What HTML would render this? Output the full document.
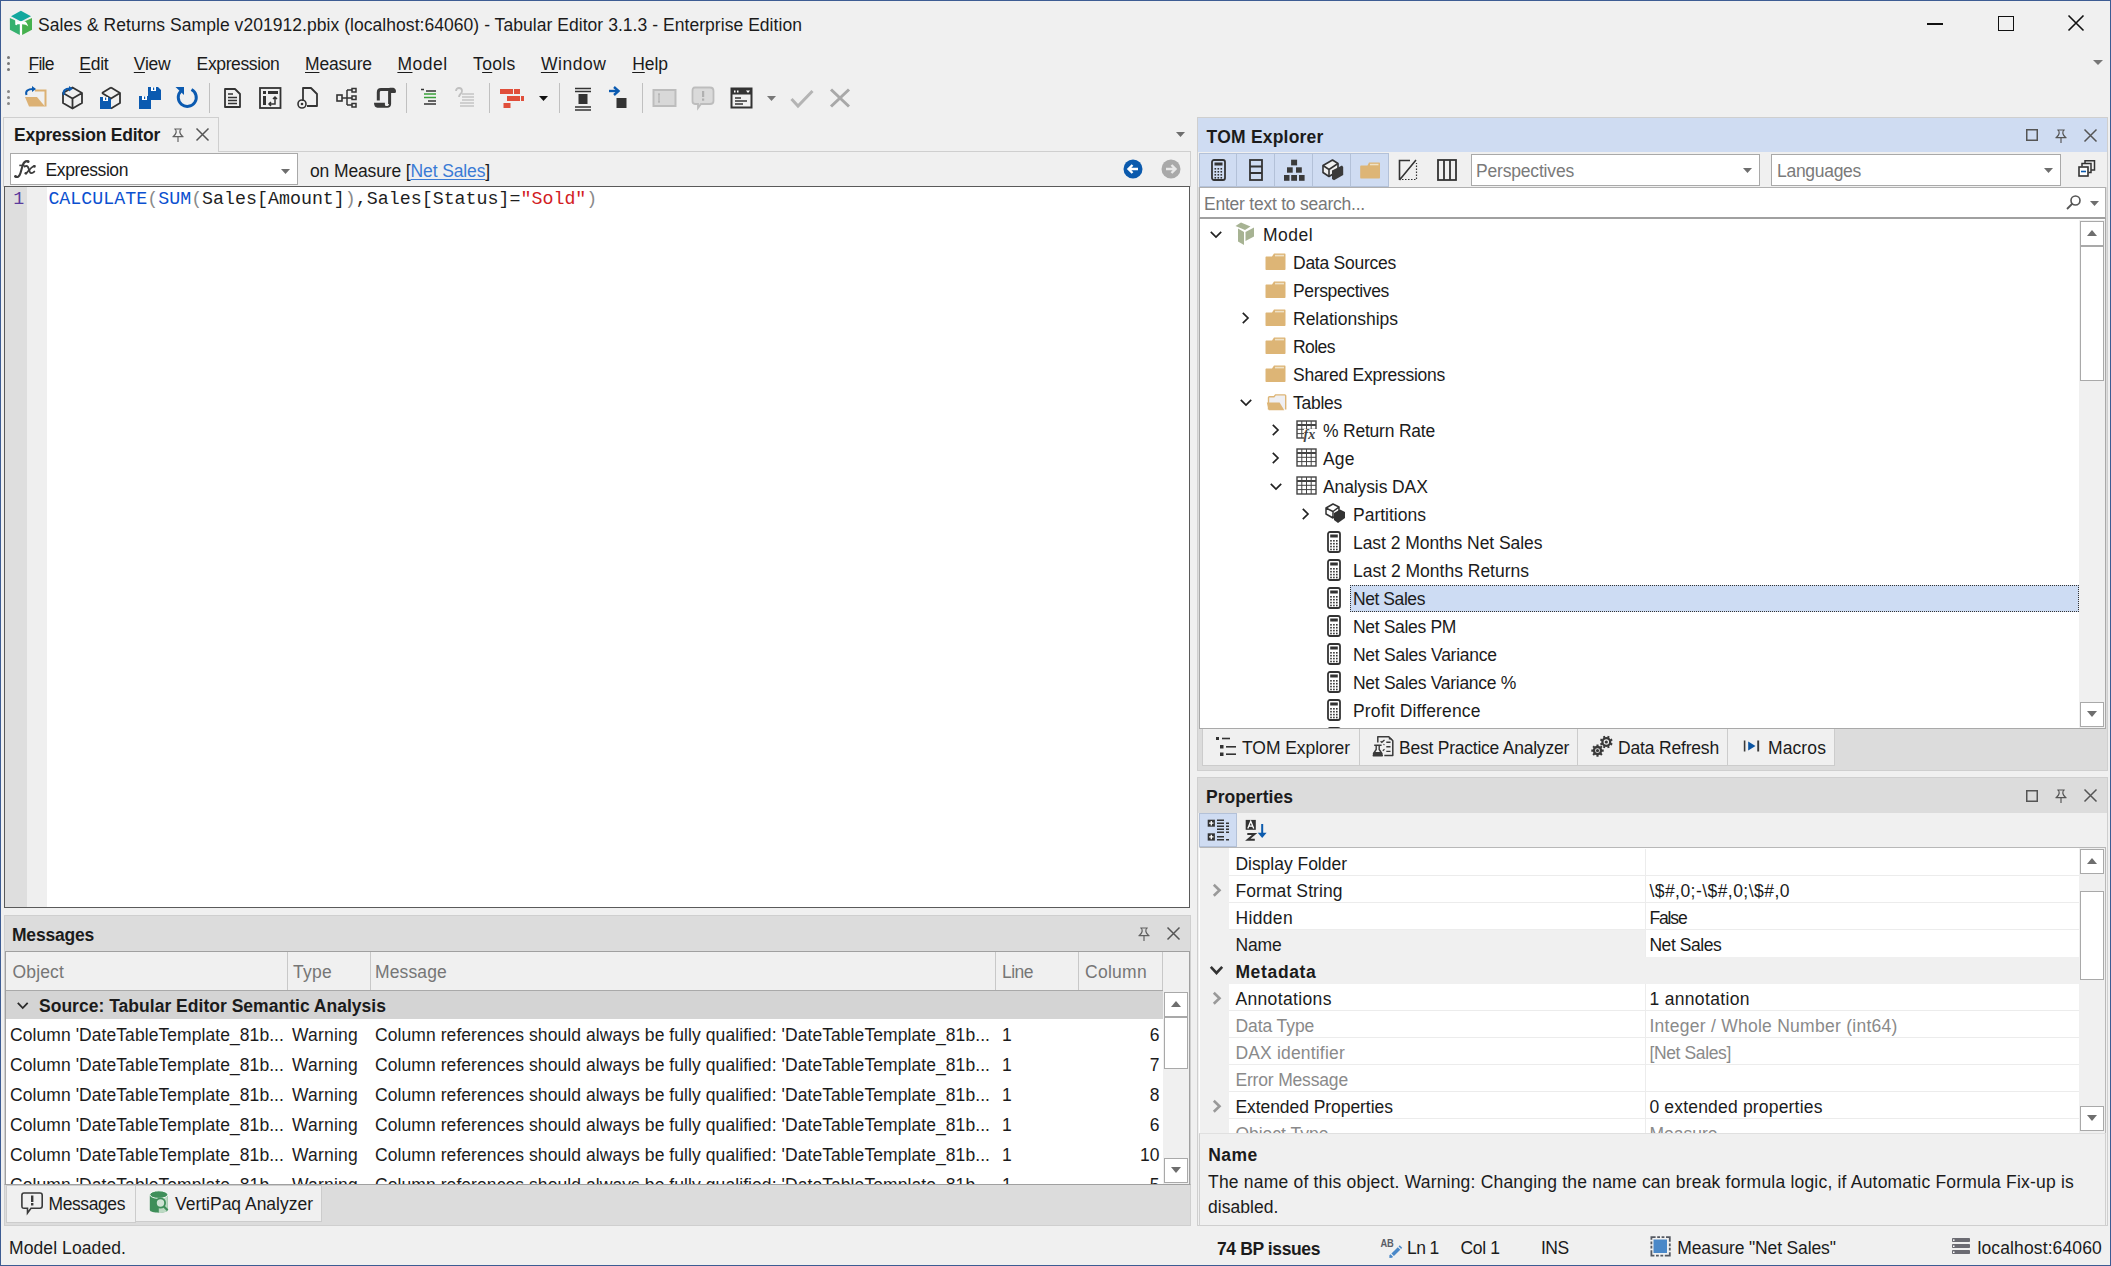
<!DOCTYPE html>
<html><head><meta charset="utf-8">
<style>
*{box-sizing:border-box}
html,body{margin:0;padding:0}
body{width:2111px;height:1266px;overflow:hidden;background:#f0f0f0;position:relative;font-family:"Liberation Sans",sans-serif;font-size:17.5px;color:#1b1b1b}
.a{position:absolute}
.t{position:absolute;white-space:nowrap}
svg{position:absolute;overflow:visible}
</style></head><body>
<div class="a" style="left:0;top:0;width:2111px;height:1266px;border:1px solid #3d5c93;z-index:50"></div>
<div id="titlebar">
<svg style="left:6px;top:8px" width="30" height="30" viewBox="0 0 30 30">
  <polygon points="14.9,2.8 25,8.3 14.9,13.6 5,8.3" fill="#13a89e"/>
  <polygon points="3.9,9.9 13.8,14.6 13.8,27 3.9,21.8" fill="#35b16f"/>
  <polygon points="16.1,14.6 26,9.9 26,21.8 16.1,27" fill="#46b14e"/>
  <path d="M9.2,12 L11,12.3 L11.6,13.3 L18.5,13.2 C20,13.5 21.2,15 22.2,18.5 C20.5,17 19,16.3 16,16.2 V27 H14 V16.2 L11.5,16.3 L10.5,17.2 L9.3,16.8 Z" fill="#fff"/>
</svg>
<div class="a" style="left:1927px;top:23px;width:16px;height:2px;background:#111"></div>
<div class="a" style="left:1998px;top:16px;width:16px;height:15px;border:1.5px solid #111"></div>
<svg style="left:2068px;top:15px" width="16" height="16"><path d="M0.5,0.5 L15.5,15.5 M15.5,0.5 L0.5,15.5" stroke="#111" stroke-width="1.6"/></svg>
</div>

<!-- ===== MENU BAR ===== -->
<div id="menubar">
<div class="a" style="left:7px;top:56px;width:3px;height:3px;border-radius:2px;background:#777"></div>
<div class="a" style="left:7px;top:62px;width:3px;height:3px;border-radius:2px;background:#777"></div>
<div class="a" style="left:7px;top:68px;width:3px;height:3px;border-radius:2px;background:#777"></div>
<svg style="left:2093px;top:60px" width="10" height="6"><polygon points="0,0 10,0 5,5" fill="#777"/></svg>
</div>


<div id="toolbar">
<div class="a" style="left:7px;top:90px;width:3px;height:3px;border-radius:2px;background:#888"></div>
<div class="a" style="left:7px;top:96px;width:3px;height:3px;border-radius:2px;background:#888"></div>
<div class="a" style="left:7px;top:102px;width:3px;height:3px;border-radius:2px;background:#888"></div>
<!-- open folder -->
<svg style="left:24px;top:86px" width="24" height="22" viewBox="0 0 24 22">
 <path d="M11,4.5 H21.5 V20.5" fill="none" stroke="#dcb174" stroke-width="2"/>
 <polygon points="1,11 13,11 21,20.5 5,20.5" fill="#dcb174"/>
 <path d="M2.5,9 C1,5 4,3 9,3" fill="none" stroke="#0b5ab0" stroke-width="2"/>
 <polygon points="8,0 12,3 8,6" fill="#0b5ab0"/>
</svg>
<!-- cube w arrow -->
<svg style="left:62px;top:86px" width="22" height="24" viewBox="0 0 22 24">
 <path d="M10.5,1.5 L20,7 L20,17 L10.5,22.5 L1,17 L1,7 Z M1,7 L10.5,12.5 L20,7 M10.5,12.5 V22.5" fill="none" stroke="#333" stroke-width="1.8" stroke-linejoin="round"/>
 <path d="M2,9 C0.5,5 3,2.5 8,2.5" fill="none" stroke="#0b5ab0" stroke-width="2"/>
 <polygon points="7,0 11,2.7 7,5.5" fill="#0b5ab0"/>
</svg>
<!-- cube w disk -->
<svg style="left:100px;top:86px" width="22" height="24" viewBox="0 0 22 24">
 <path d="M11,1.5 L20,7 L20,17 L11,22.5 M2,7 L11,12.5 L20,7 M2,7 L11,1.5" fill="none" stroke="#333" stroke-width="1.8" stroke-linejoin="round"/>
 <path d="M0,11 H8 L11,13 V23 H0 Z" fill="#0b5ab0"/>
 <rect x="3" y="11" width="5" height="4" fill="#fff"/><rect x="5" y="11.5" width="1.2" height="2.5" fill="#0b5ab0"/>
</svg>
<!-- two disks -->
<svg style="left:138px;top:86px" width="24" height="24" viewBox="0 0 24 24">
 <path d="M10,1 H20 L23,4 V14 H10 Z" fill="#0b5ab0"/>
 <rect x="13" y="1" width="5" height="4" fill="#fff"/><rect x="15" y="1.5" width="1.2" height="2.5" fill="#0b5ab0"/>
 <path d="M1,10 H10 L13,13 V23 H1 Z" fill="#0b5ab0"/>
 <rect x="4" y="10" width="5" height="4" fill="#fff"/><rect x="6" y="10.5" width="1.2" height="2.5" fill="#0b5ab0"/>
</svg>
<!-- refresh -->
<svg style="left:175px;top:86px" width="24" height="24" viewBox="0 0 24 24">
 <path d="M6,5 A9,9 0 1 0 16.5,3.5" fill="none" stroke="#0b5ab0" stroke-width="3"/>
 <polygon points="0.5,1 9,1 9,9" fill="#0b5ab0"/>
</svg>
<div class="a" style="left:209px;top:83px;width:1px;height:30px;background:#c0c0c0"></div>
<!-- doc -->
<svg style="left:224px;top:88px" width="18" height="20" viewBox="0 0 18 20">
 <path d="M1,1 H11 L16,6 V19 H1 Z" fill="none" stroke="#333" stroke-width="1.8" stroke-linejoin="round"/>
 <path d="M4,6 H9 M4,9.5 H13 M4,12.5 H13 M4,15.5 H13" stroke="#333" stroke-width="1.4"/>
</svg>
<!-- box arrows -->
<svg style="left:259px;top:87px" width="24" height="22" viewBox="0 0 24 22">
 <rect x="1" y="1" width="20.5" height="20" fill="none" stroke="#333" stroke-width="1.8"/>
 <rect x="4" y="4" width="3" height="3" fill="#333"/><rect x="9" y="4" width="10" height="3" fill="#333"/>
 <rect x="4" y="9" width="3" height="9" fill="#333"/>
 <path d="M10,17 H16 V11 M14,12 L16,10 L18,12 M12,15 L10,17 L12,19" fill="none" stroke="#333" stroke-width="1.5"/>
</svg>
<!-- doc circle -->
<svg style="left:297px;top:87px" width="24" height="22" viewBox="0 0 24 22">
 <path d="M6,14 V1 H14 L20,7 V19 H10" fill="none" stroke="#333" stroke-width="1.8" stroke-linejoin="round"/>
 <circle cx="5" cy="17" r="4" fill="none" stroke="#333" stroke-width="1.6"/><circle cx="5" cy="17" r="1.3" fill="#333"/>
</svg>
<!-- hierarchy -->
<svg style="left:336px;top:87px" width="22" height="22" viewBox="0 0 22 22">
 <rect x="1" y="8" width="5" height="6" fill="none" stroke="#333" stroke-width="1.6"/>
 <rect x="16" y="1.5" width="4" height="3.5" fill="none" stroke="#333" stroke-width="1.5"/>
 <rect x="16" y="9" width="4" height="3.5" fill="none" stroke="#333" stroke-width="1.5"/>
 <rect x="16" y="16.5" width="4" height="3.5" fill="none" stroke="#333" stroke-width="1.5"/>
 <path d="M6,11 H11 M11,3 V18 M11,3 H16 M11,11 H16 M11,18 H16" fill="none" stroke="#333" stroke-width="1.5"/>
</svg>
<!-- scroll -->
<svg style="left:368px;top:84px" width="32" height="28" viewBox="0 0 32 28">
 <rect x="11.5" y="6.5" width="9.3" height="13" fill="#eeeef0"/>
 <path d="M10.3,16.6 V8.2 C10.3,6.2 11.3,5.4 13,5.4 H24.8 C25.9,5.4 26.5,6.2 26.5,7.6 H21.6 V20" fill="none" stroke="#3a3a3a" stroke-width="3" stroke-linejoin="round"/>
 <path d="M26.6,5.3 V7.8 H21.6 V3.8 H24.6 C25.8,3.8 26.6,4.4 26.6,5.3 Z" fill="#3a3a3a"/>
 <path d="M6,18.8 H16.9 V20.6 C16.9,21.6 17.6,22.1 18.8,22.1 C20.2,22.1 21,21.3 21,20 H23.1 C23.1,22.3 21.6,23.7 19.4,23.7 H9.5 C7.3,23.7 6,22 6,18.8 Z" fill="#3a3a3a"/>
</svg>
<div class="a" style="left:406px;top:83px;width:1px;height:30px;background:#c0c0c0"></div>
<!-- indent green -->
<svg style="left:420px;top:88px" width="20" height="18" viewBox="0 0 20 18">
 <path d="M1,1.5 H4 M6,3 H16 M4,16 H16 M8,13 H16" stroke="#333" stroke-width="1.3"/>
 <path d="M4,6 H16 M4,9.5 H16" stroke="#3aa03a" stroke-width="1.5"/>
</svg>
<!-- disabled icon -->
<svg style="left:454px;top:86px" width="22" height="22" viewBox="0 0 22 22">
 <path d="M2,5 C2,1 8,1 8,5 C8,8 5,8 5,11" fill="none" stroke="#c0c0c0" stroke-width="1.8"/>
 <path d="M8,8 H20 M8,11 H20 M8,14 H20 M6,17 H20 M6,20 H20" stroke="#c4c4c4" stroke-width="1.6"/>
</svg>
<div class="a" style="left:489px;top:83px;width:1px;height:30px;background:#c0c0c0"></div>
<!-- red bars -->
<svg style="left:499px;top:88px" width="26" height="22" viewBox="0 0 26 22">
 <rect x="1" y="1" width="13" height="5" fill="#e04e3a"/><rect x="15" y="1" width="6" height="5" fill="#e04e3a"/>
 <rect x="8" y="8" width="13" height="5" fill="#e04e3a"/><rect x="22" y="8" width="3" height="5" fill="#e04e3a"/>
 <rect x="4.5" y="15" width="7" height="5" fill="#e04e3a"/>
</svg>
<svg style="left:539px;top:96px" width="9" height="6"><polygon points="0,0 9,0 4.5,5" fill="#111"/></svg>
<div class="a" style="left:559px;top:83px;width:1px;height:30px;background:#c0c0c0"></div>
<!-- square with lines -->
<svg style="left:574px;top:87px" width="18" height="24" viewBox="0 0 18 24">
 <path d="M1,1.5 H17 M1,4.5 H17 M1,20 H17 M1,23 H17" stroke="#333" stroke-width="1.4"/>
 <rect x="4.5" y="7" width="9" height="10" fill="#333"/>
</svg>
<!-- arrow square -->
<svg style="left:608px;top:86px" width="20" height="23" viewBox="0 0 20 23">
 <path d="M1,5 H9" stroke="#0b5ab0" stroke-width="2.4"/><path d="M6,1 L10.5,5 L6,9" fill="none" stroke="#0b5ab0" stroke-width="2.4"/>
 <rect x="8.5" y="12" width="10" height="10" fill="#333"/>
</svg>
<div class="a" style="left:642px;top:83px;width:1px;height:30px;background:#c0c0c0"></div>
<!-- gray box -->
<svg style="left:652px;top:88px" width="25" height="20" viewBox="0 0 25 20">
 <rect x="1.5" y="2" width="22" height="16" fill="#d8d8d8" stroke="#bdbdbd" stroke-width="2"/>
 <path d="M6,6 H8 M7,6 V14 M6,14 H8" stroke="#aaa" stroke-width="1"/>
</svg>
<!-- gray bubble -->
<svg style="left:691px;top:86px" width="24" height="24" viewBox="0 0 24 24">
 <path d="M4,1.5 H19 C21,1.5 22.5,3 22.5,5 V15 C22.5,17 21,18 19,18 H10 L7,22 V18 H4 C2,18 1.5,17 1.5,15 V5 C1.5,3 2,1.5 4,1.5 Z" fill="#dadada" stroke="#bdbdbd" stroke-width="1.8"/>
 <rect x="11" y="5" width="2.2" height="6" fill="#b0b0b0"/><rect x="11" y="12.5" width="2.2" height="2.2" fill="#b0b0b0"/>
</svg>
<!-- form -->
<svg style="left:730px;top:87px" width="23" height="22" viewBox="0 0 23 22">
 <rect x="1.5" y="1.5" width="20" height="19" fill="none" stroke="#333" stroke-width="2"/>
 <rect x="1.5" y="1.5" width="20" height="6" fill="#333"/>
 <rect x="4" y="3.5" width="1.5" height="2" fill="#fff"/><rect x="7" y="3.5" width="1.5" height="2" fill="#fff"/>
 <polygon points="16,3.5 20,3.5 18,6" fill="#fff"/>
 <path d="M5,11 H11 M5,14 H17 M5,17 H13" stroke="#333" stroke-width="1.5"/>
</svg>
<svg style="left:767px;top:96px" width="9" height="6"><polygon points="0,0 9,0 4.5,5" fill="#777"/></svg>
<!-- check gray -->
<svg style="left:790px;top:89px" width="24" height="20" viewBox="0 0 24 20">
 <path d="M1.5,10 L8,17 L22.5,2" fill="none" stroke="#b4b4b4" stroke-width="3"/>
</svg>
<!-- x gray -->
<svg style="left:829px;top:88px" width="22" height="20" viewBox="0 0 22 20">
 <path d="M2,1.5 L20,18.5 M20,1.5 L2,18.5" stroke="#a8a8a8" stroke-width="3"/>
</svg>
</div>


<div class="t" style="letter-spacing:0.047px;left:38px;top:15.22px;font-size:17.5px;line-height:20px;">Sales &amp; Returns Sample v201912.pbix (localhost:64060) - Tabular Editor 3.1.3 - Enterprise Edition</div>
<div class="t" style="letter-spacing:-0.705px;left:28.4px;top:54.22px;font-size:17.5px;line-height:20px;"><u style="text-underline-offset:2px">F</u>ile</div>
<div class="t" style="letter-spacing:-0.243px;left:79.3px;top:54.22px;font-size:17.5px;line-height:20px;"><u style="text-underline-offset:2px">E</u>dit</div>
<div class="t" style="letter-spacing:-0.231px;left:133.8px;top:54.22px;font-size:17.5px;line-height:20px;"><u style="text-underline-offset:2px">V</u>iew</div>
<div class="t" style="letter-spacing:-0.368px;left:196.6px;top:54.22px;font-size:17.5px;line-height:20px;">Expression</div>
<div class="t" style="letter-spacing:-0.171px;left:305px;top:54.22px;font-size:17.5px;line-height:20px;"><u style="text-underline-offset:2px">M</u>easure</div>
<div class="t" style="letter-spacing:0.506px;left:397.4px;top:54.22px;font-size:17.5px;line-height:20px;"><u style="text-underline-offset:2px">M</u>odel</div>
<div class="t" style="letter-spacing:0.368px;left:473px;top:54.22px;font-size:17.5px;line-height:20px;">T<u style="text-underline-offset:2px">o</u>ols</div>
<div class="t" style="letter-spacing:0.572px;left:540.9px;top:54.22px;font-size:17.5px;line-height:20px;"><u style="text-underline-offset:2px">W</u>indow</div>
<div class="t" style="letter-spacing:-0.050px;left:632.2px;top:54.22px;font-size:17.5px;line-height:20px;"><u style="text-underline-offset:2px">H</u>elp</div>
<div class="a" style="left:3px;top:117px;width:216px;height:35px;border:1px solid #cfcfcf;border-bottom:none;"></div>
<div class="t" style="letter-spacing:-0.222px;left:14px;top:125.22px;font-size:17.5px;line-height:20px;font-weight:bold;">Expression Editor</div>
<svg style="left:172px;top:128px" width="12" height="14" viewBox="0 0 12 14"><path d="M2.2,1 H9.8 M3.2,1 C4.8,3 4.6,5.5 1.5,8.3 M8.8,1 C7.2,3 7.4,5.5 10.5,8.3 M0.5,8.6 H11.5 M6,8.6 V14" fill="none" stroke="#606060" stroke-width="1.15"/></svg>
<svg style="left:196px;top:128px" width="13" height="13" viewBox="0 0 13 13"><path d="M0.5,0.5 L12.5,12.5 M12.5,0.5 L0.5,12.5" stroke="#555" stroke-width="1.5"/></svg>
<svg style="left:1176px;top:132px" width="9" height="5" viewBox="0 0 9 5"><polygon points="0,0 9,0 4.5,5" fill="#6e6e6e"/></svg>
<div class="a" style="left:218px;top:151px;width:973px;height:1px;background:#cfcfcf;"></div>
<div class="a" style="left:3px;top:151px;width:1px;height:36px;background:#cfcfcf;"></div>
<div class="a" style="left:1190px;top:151px;width:1px;height:36px;background:#cfcfcf;"></div>
<div class="a" style="left:10px;top:153px;width:288px;height:32px;background:#fff;border:1px solid #a9a9a9;"></div>
<svg style="left:10px;top:154px" width="30" height="28" viewBox="0 0 30 28"><path d="M5.2,22.6 C7.5,23.8 9.5,22.5 10.5,19 L12.6,11.5 C13.8,8 15.5,6.6 18.3,7.3" fill="none" stroke="#3c3c3c" stroke-width="2.1" stroke-linecap="round"/><circle cx="18.2" cy="7.8" r="1.3" fill="#3c3c3c"/><circle cx="5.6" cy="22.3" r="1.3" fill="#3c3c3c"/><path d="M9.3,11.4 H14.6" stroke="#3c3c3c" stroke-width="1.6"/><path d="M14.6,12.5 C16.6,11.3 17.8,12 18.6,14.5 L19.8,17.8 C20.6,19.6 22.2,19.6 24.3,17.6" fill="none" stroke="#3c3c3c" stroke-width="1.9" stroke-linecap="round"/><path d="M24.6,11.8 C23,11.7 21.5,13 16,19.6" fill="none" stroke="#3c3c3c" stroke-width="1.7" stroke-linecap="round"/><circle cx="24.4" cy="12.4" r="1.3" fill="#3c3c3c"/><circle cx="15.8" cy="19.3" r="1.3" fill="#3c3c3c"/></svg>
<div class="t" style="letter-spacing:-0.418px;left:45.6px;top:159.82px;font-size:17.5px;line-height:20px;">Expression</div>
<svg style="left:281px;top:169px" width="9" height="5" viewBox="0 0 9 5"><polygon points="0,0 9,0 4.5,5" fill="#6e6e6e"/></svg>
<div class="t" style="letter-spacing:-0.131px;left:310px;top:160.62px;font-size:17.5px;line-height:20px;">on Measure [<span style="color:#3a7bd5;text-decoration:underline;text-underline-offset:2px">Net Sales</span>]</div>
<svg style="left:1123px;top:159px" width="20" height="20" viewBox="0 0 20 20"><circle cx="10" cy="10" r="9.5" fill="#0b5aad"/><path d="M15,10 H6 M9.5,6 L5.5,10 L9.5,14" fill="none" stroke="#fff" stroke-width="2.4"/></svg>
<svg style="left:1161px;top:159px" width="20" height="20" viewBox="0 0 20 20"><circle cx="10" cy="10" r="9.5" fill="#a9a9a9"/><path d="M5,10 H14 M10.5,6 L14.5,10 L10.5,14" fill="none" stroke="#e8e8e8" stroke-width="2.4"/></svg>
<div class="a" style="left:4px;top:186px;width:1186px;height:722px;background:#fff;border:1px solid #5a5a5a;"></div>
<div class="a" style="left:5px;top:187px;width:22px;height:720px;background:#dedede;"></div>
<div class="a" style="left:27px;top:187px;width:20px;height:720px;background:#efefef;"></div>
<div class="t" style="left:13.3px;top:188.32px;font-size:18.3px;line-height:22px;color:#5b3a9c;font-family:'Liberation Mono',monospace;">1</div>
<div class="t" style="letter-spacing:0.007px;left:48.4px;top:188.22px;font-size:18.3px;line-height:22px;color:#1e1e1e;font-family:'Liberation Mono',monospace;"><span style="color:#0b50d0">CALCULATE</span><span style="color:#8a8a8a">(</span><span style="color:#0b50d0">SUM</span><span style="color:#8a8a8a">(</span>Sales[Amount]<span style="color:#8a8a8a">)</span>,Sales[Status]=<span style="color:#d2201f">"Sold"</span><span style="color:#8a8a8a">)</span></div>
<div class="a" style="left:4px;top:915px;width:1187px;height:311px;background:#dcdcdc;border:1px solid #cfcfcf;"></div>
<div class="t" style="letter-spacing:-0.209px;left:12px;top:925.22px;font-size:17.5px;line-height:20px;font-weight:bold;">Messages</div>
<svg style="left:1138px;top:927px" width="12" height="14" viewBox="0 0 12 14"><path d="M2.2,1 H9.8 M3.2,1 C4.8,3 4.6,5.5 1.5,8.3 M8.8,1 C7.2,3 7.4,5.5 10.5,8.3 M0.5,8.6 H11.5 M6,8.6 V14" fill="none" stroke="#606060" stroke-width="1.15"/></svg>
<svg style="left:1167px;top:927px" width="13" height="13" viewBox="0 0 13 13"><path d="M0.5,0.5 L12.5,12.5 M12.5,0.5 L0.5,12.5" stroke="#555" stroke-width="1.5"/></svg>
<div class="a" style="left:5px;top:951px;width:1185px;height:234px;background:#fff;border:1px solid #a0a0a0;"></div>
<div class="a" style="left:6px;top:952px;width:1183px;height:38px;background:#f0f0f0;"></div>
<div class="a" style="left:6px;top:990px;width:1183px;height:1px;background:#a9a9a9;"></div>
<div class="a" style="left:287px;top:952px;width:1px;height:38px;background:#c8c8c8;"></div>
<div class="a" style="left:370px;top:952px;width:1px;height:38px;background:#c8c8c8;"></div>
<div class="a" style="left:995px;top:952px;width:1px;height:38px;background:#c8c8c8;"></div>
<div class="a" style="left:1078px;top:952px;width:1px;height:38px;background:#c8c8c8;"></div>
<div class="a" style="left:1162px;top:952px;width:1px;height:38px;background:#c8c8c8;"></div>
<div class="t" style="letter-spacing:0.154px;left:12.5px;top:962.42px;font-size:17.5px;line-height:20px;color:#767676;">Object</div>
<div class="t" style="letter-spacing:0.262px;left:293px;top:962.42px;font-size:17.5px;line-height:20px;color:#767676;">Type</div>
<div class="t" style="letter-spacing:0.141px;left:375px;top:962.42px;font-size:17.5px;line-height:20px;color:#767676;">Message</div>
<div class="t" style="letter-spacing:-0.523px;left:1002px;top:962.42px;font-size:17.5px;line-height:20px;color:#767676;">Line</div>
<div class="t" style="letter-spacing:0.281px;left:1085px;top:962.42px;font-size:17.5px;line-height:20px;color:#767676;">Column</div>
<div class="a" style="left:6px;top:991px;width:1157px;height:28px;background:#d4d4d4;"></div>
<svg style="left:17px;top:1002px" width="11.5" height="7" viewBox="0 0 11.5 7"><path d="M0.8,0.8 L5.75,6 L10.7,0.8" fill="none" stroke="#2a2a2a" stroke-width="1.8"/></svg>
<div class="t" style="letter-spacing:0.020px;left:39px;top:996.22px;font-size:17.5px;line-height:20px;font-weight:bold;">Source: Tabular Editor Semantic Analysis</div>
<div class="t" style="letter-spacing:0.067px;left:10px;top:1024.92px;font-size:17.5px;line-height:20px;">Column &#x27;DateTableTemplate_81b...</div>
<div class="t" style="letter-spacing:0.212px;left:292px;top:1024.92px;font-size:17.5px;line-height:20px;">Warning</div>
<div class="t" style="letter-spacing:0.073px;left:375px;top:1024.92px;font-size:17.5px;line-height:20px;">Column references should always be fully qualified: &#x27;DateTableTemplate_81b...</div>
<div class="t" style="left:1002px;top:1024.92px;font-size:17.5px;line-height:20px;">1</div>
<div class="t" style="right:951.5px;top:1024.92px;font-size:17.5px;line-height:20px;">6</div>
<div class="t" style="letter-spacing:0.067px;left:10px;top:1054.92px;font-size:17.5px;line-height:20px;">Column &#x27;DateTableTemplate_81b...</div>
<div class="t" style="letter-spacing:0.212px;left:292px;top:1054.92px;font-size:17.5px;line-height:20px;">Warning</div>
<div class="t" style="letter-spacing:0.073px;left:375px;top:1054.92px;font-size:17.5px;line-height:20px;">Column references should always be fully qualified: &#x27;DateTableTemplate_81b...</div>
<div class="t" style="left:1002px;top:1054.92px;font-size:17.5px;line-height:20px;">1</div>
<div class="t" style="right:951.5px;top:1054.92px;font-size:17.5px;line-height:20px;">7</div>
<div class="t" style="letter-spacing:0.067px;left:10px;top:1084.92px;font-size:17.5px;line-height:20px;">Column &#x27;DateTableTemplate_81b...</div>
<div class="t" style="letter-spacing:0.212px;left:292px;top:1084.92px;font-size:17.5px;line-height:20px;">Warning</div>
<div class="t" style="letter-spacing:0.073px;left:375px;top:1084.92px;font-size:17.5px;line-height:20px;">Column references should always be fully qualified: &#x27;DateTableTemplate_81b...</div>
<div class="t" style="left:1002px;top:1084.92px;font-size:17.5px;line-height:20px;">1</div>
<div class="t" style="right:951.5px;top:1084.92px;font-size:17.5px;line-height:20px;">8</div>
<div class="t" style="letter-spacing:0.067px;left:10px;top:1114.92px;font-size:17.5px;line-height:20px;">Column &#x27;DateTableTemplate_81b...</div>
<div class="t" style="letter-spacing:0.212px;left:292px;top:1114.92px;font-size:17.5px;line-height:20px;">Warning</div>
<div class="t" style="letter-spacing:0.073px;left:375px;top:1114.92px;font-size:17.5px;line-height:20px;">Column references should always be fully qualified: &#x27;DateTableTemplate_81b...</div>
<div class="t" style="left:1002px;top:1114.92px;font-size:17.5px;line-height:20px;">1</div>
<div class="t" style="right:951.5px;top:1114.92px;font-size:17.5px;line-height:20px;">6</div>
<div class="t" style="letter-spacing:0.067px;left:10px;top:1144.92px;font-size:17.5px;line-height:20px;">Column &#x27;DateTableTemplate_81b...</div>
<div class="t" style="letter-spacing:0.212px;left:292px;top:1144.92px;font-size:17.5px;line-height:20px;">Warning</div>
<div class="t" style="letter-spacing:0.073px;left:375px;top:1144.92px;font-size:17.5px;line-height:20px;">Column references should always be fully qualified: &#x27;DateTableTemplate_81b...</div>
<div class="t" style="left:1002px;top:1144.92px;font-size:17.5px;line-height:20px;">1</div>
<div class="t" style="right:951.5px;top:1144.92px;font-size:17.5px;line-height:20px;">10</div>
<div class="t" style="letter-spacing:0.067px;left:10px;top:1174.92px;font-size:17.5px;line-height:20px;">Column &#x27;DateTableTemplate_81b...</div>
<div class="t" style="letter-spacing:0.212px;left:292px;top:1174.92px;font-size:17.5px;line-height:20px;">Warning</div>
<div class="t" style="letter-spacing:0.073px;left:375px;top:1174.92px;font-size:17.5px;line-height:20px;">Column references should always be fully qualified: &#x27;DateTableTemplate_81b...</div>
<div class="t" style="left:1002px;top:1174.92px;font-size:17.5px;line-height:20px;">1</div>
<div class="t" style="right:951.5px;top:1174.92px;font-size:17.5px;line-height:20px;">5</div>
<div class="a" style="left:1163px;top:990px;width:26px;height:194px;background:#f0f0f0;"></div>
<div class="a" style="left:1164px;top:992px;width:24px;height:25px;background:#fff;border:1px solid #a9a9a9;"></div>
<svg style="left:1171px;top:1001px" width="10" height="6" viewBox="0 0 10 6"><polygon points="0,6 10,6 5.0,0" fill="#6e6e6e"/></svg>
<div class="a" style="left:1164px;top:1017px;width:24px;height:52px;background:#fff;border:1px solid #a9a9a9;"></div>
<div class="a" style="left:1164px;top:1158px;width:24px;height:25px;background:#fff;border:1px solid #a9a9a9;"></div>
<svg style="left:1171px;top:1167px" width="10" height="6" viewBox="0 0 10 6"><polygon points="0,0 10,0 5.0,6" fill="#6e6e6e"/></svg>
<div class="a" style="left:4px;top:1184px;width:1187px;height:42px;background:#dcdcdc;border:1px solid #cfcfcf;border-top:1px solid #a0a0a0;"></div>
<div class="a" style="left:6px;top:1185px;width:130px;height:38px;background:#f0f0f0;border:1px solid #cccccc;"></div>
<div class="a" style="left:136px;top:1185px;width:186px;height:37px;background:#f0f0f0;border:1px solid #cccccc;border-left:none;"></div>
<svg style="left:21px;top:1192px" width="23" height="23" viewBox="0 0 23 23"><path d="M3,1 H19 C20.6,1 21.2,1.8 21.2,3.2 V14 C21.2,15.5 20.6,16.2 19,16.2 H10 L6.5,21 V16.2 H3 C1.4,16.2 0.9,15.5 0.9,14 V3.2 C0.9,1.8 1.4,1 3,1 Z" fill="none" stroke="#3a3a3a" stroke-width="1.6"/><rect x="10" y="3.5" width="2.4" height="6.5" fill="#3a3a3a"/><rect x="10" y="11" width="2.4" height="2.5" fill="#3a3a3a"/></svg>
<div class="t" style="letter-spacing:-0.408px;left:48.5px;top:1193.62px;font-size:17.5px;line-height:20px;">Messages</div>
<svg style="left:149px;top:1190px" width="20" height="25" viewBox="0 0 20 25"><path d="M0.8,5 V20 C0.8,23.5 18.8,23.5 18.8,20 V5 Z" fill="#3f8f5a"/><path d="M9.8,7.5 C14,7.5 18.8,6.5 18.8,5 V20 C18.8,22 14,23 9.8,23 Z" fill="#bcd9c3"/><ellipse cx="9.8" cy="4.6" rx="9" ry="3.8" fill="#3f8f5a" stroke="#fff" stroke-width="0.9"/><circle cx="11.5" cy="13" r="4.6" fill="#cfe3d4" stroke="#3f8f5a" stroke-width="1.8"/><path d="M14.6,16.2 L18.6,20.2" stroke="#3f8f5a" stroke-width="2.2"/></svg>
<div class="t" style="letter-spacing:-0.008px;left:175px;top:1193.62px;font-size:17.5px;line-height:20px;">VertiPaq Analyzer</div>
<div class="t" style="letter-spacing:0.093px;left:9px;top:1237.82px;font-size:17.5px;line-height:20px;">Model Loaded.</div>
<div class="a" style="left:1197px;top:117px;width:911px;height:654px;background:#dcdcdc;border:1px solid #cfcfcf;"></div>
<div class="a" style="left:1198px;top:118px;width:909px;height:34px;background:#cfdcf2;"></div>
<div class="t" style="letter-spacing:0.214px;left:1206.6px;top:126.72px;font-size:17.5px;line-height:20px;font-weight:bold;">TOM Explorer</div>
<svg style="left:2026px;top:129px" width="12" height="12" viewBox="0 0 12 12"><rect x="0.75" y="0.75" width="10.5" height="10.5" fill="none" stroke="#555" stroke-width="1.5"/></svg>
<svg style="left:2055px;top:129px" width="12" height="14" viewBox="0 0 12 14"><path d="M2.2,1 H9.8 M3.2,1 C4.8,3 4.6,5.5 1.5,8.3 M8.8,1 C7.2,3 7.4,5.5 10.5,8.3 M0.5,8.6 H11.5 M6,8.6 V14" fill="none" stroke="#555" stroke-width="1.15"/></svg>
<svg style="left:2084px;top:129px" width="13" height="13" viewBox="0 0 13 13"><path d="M0.5,0.5 L12.5,12.5 M12.5,0.5 L0.5,12.5" stroke="#555" stroke-width="1.5"/></svg>
<div class="a" style="left:1198px;top:152px;width:909px;height:35px;background:#f0f0f0;"></div>
<div class="a" style="left:1199px;top:153px;width:190px;height:34px;background:#cfdcf2;border:1px solid #b3c1d8;"></div>
<div class="a" style="left:1236px;top:154px;width:1px;height:32px;background:#b3c1d8;"></div>
<div class="a" style="left:1274px;top:154px;width:1px;height:32px;background:#b3c1d8;"></div>
<div class="a" style="left:1312px;top:154px;width:1px;height:32px;background:#b3c1d8;"></div>
<div class="a" style="left:1350px;top:154px;width:1px;height:32px;background:#b3c1d8;"></div>
<svg style="left:1211px;top:159px" width="15" height="22" viewBox="0 0 15 22"><rect x="1" y="1" width="13" height="20" rx="2" fill="none" stroke="#333" stroke-width="1.8"/><rect x="3.5" y="3.5" width="8" height="3" fill="#333"/><rect x="3.5" y="9" width="1.6" height="1.6" fill="#333"/><rect x="3.5" y="12" width="1.6" height="1.6" fill="#333"/><rect x="3.5" y="15" width="1.6" height="1.6" fill="#333"/><rect x="3.5" y="18" width="1.6" height="1.6" fill="#333"/><rect x="6.5" y="9" width="1.6" height="1.6" fill="#333"/><rect x="6.5" y="12" width="1.6" height="1.6" fill="#333"/><rect x="6.5" y="15" width="1.6" height="1.6" fill="#333"/><rect x="6.5" y="18" width="1.6" height="1.6" fill="#333"/><rect x="9.5" y="9" width="1.6" height="1.6" fill="#333"/><rect x="9.5" y="12" width="1.6" height="1.6" fill="#333"/><rect x="9.5" y="15" width="1.6" height="1.6" fill="#333"/><rect x="9.5" y="18" width="1.6" height="1.6" fill="#333"/></svg>
<svg style="left:1249px;top:159px" width="14" height="22" viewBox="0 0 14 22"><rect x="1" y="1" width="12" height="20" fill="none" stroke="#333" stroke-width="1.8"/><path d="M1,7.5 H13 M1,14 H13" stroke="#333" stroke-width="1.8"/></svg>
<svg style="left:1276px;top:150px" width="40" height="40" viewBox="0 0 40 40"><rect x="15.1" y="9.7" width="6" height="5.7" fill="#3a3a3a"/><rect x="11" y="17.3" width="5.7" height="5.4" fill="#3a3a3a"/><rect x="20" y="17.3" width="5.8" height="5.4" fill="#3a3a3a"/><rect x="8" y="25" width="5.5" height="5.8" fill="#3a3a3a"/><rect x="15.2" y="25" width="5.8" height="5.8" fill="#3a3a3a"/><rect x="23" y="25" width="5.6" height="5.8" fill="#3a3a3a"/></svg>
<svg style="left:1322px;top:159px" width="22" height="22" viewBox="0 0 22 22"><path d="M1,6.5 L10.5,1 L16,4.5 L16,12 L7,17.5 L1,13.5 Z" fill="#f0f0f0" stroke="#333" stroke-width="1.6" stroke-linejoin="round"/><path d="M1,6.5 L7,10.5 L16,4.5 M7,10.5 V17.5" fill="none" stroke="#333" stroke-width="1.6"/><path d="M10,11.5 L20,6.5 L21.2,8 V16 L12,21.3 L10,20 Z" fill="#3a3a3a"/></svg>
<svg style="left:1360px;top:161.5px" width="21" height="17" viewBox="0 0 21 17"><path d="M9,0.5 H19 C19.7,0.5 20,0.8 20,1.5 V15.5 C20,16 19.7,16.5 19,16.5 H1 C0.5,16.5 0.2,16 0.2,15.5 V4.5 C0.2,3.8 0.5,3.5 1,3.5 H7.5 Z" fill="#ddb576"/><rect x="10" y="1.8" width="8.5" height="1.5" fill="#efe2c6"/></svg>
<svg style="left:1398px;top:159px" width="20" height="22" viewBox="0 0 20 22"><path d="M1.5,21 V1.5 H12 M1.5,21 L18,1" fill="none" stroke="#333" stroke-width="1.6"/><path d="M4,20.5 H18.5 V4" fill="none" stroke="#333" stroke-width="1.2" stroke-dasharray="1.5,1.5"/></svg>
<svg style="left:1437px;top:159px" width="20" height="22" viewBox="0 0 20 22"><rect x="1" y="1" width="18" height="20" fill="none" stroke="#333" stroke-width="1.8"/><path d="M7,1 V21 M13,1 V21" stroke="#333" stroke-width="1.8"/></svg>
<div class="a" style="left:1471px;top:154px;width:289px;height:32px;background:#fff;border:1px solid #a9a9a9;"></div>
<div class="t" style="letter-spacing:-0.182px;left:1476px;top:160.62px;font-size:17.5px;line-height:20px;color:#7a7a7a;">Perspectives</div>
<svg style="left:1743px;top:168px" width="9" height="5" viewBox="0 0 9 5"><polygon points="0,0 9,0 4.5,5" fill="#6e6e6e"/></svg>
<div class="a" style="left:1771px;top:154px;width:290px;height:32px;background:#fff;border:1px solid #a9a9a9;"></div>
<div class="t" style="letter-spacing:-0.292px;left:1777px;top:160.62px;font-size:17.5px;line-height:20px;color:#7a7a7a;">Languages</div>
<svg style="left:2044px;top:168px" width="9" height="5" viewBox="0 0 9 5"><polygon points="0,0 9,0 4.5,5" fill="#6e6e6e"/></svg>
<svg style="left:2078px;top:160px" width="18" height="18" viewBox="0 0 18 18"><rect x="1" y="7" width="9" height="9" fill="#fff" stroke="#333" stroke-width="1.6"/><path d="M4,6.5 V3.5 H13 V12.5 H10.5 M7,3 V0.8 H16.5 V10 H13.5" fill="none" stroke="#333" stroke-width="1.5"/><path d="M3,11.5 H8" stroke="#0b5aad" stroke-width="1.6"/></svg>
<div class="a" style="left:1199px;top:187px;width:907px;height:32px;background:#fff;border:1px solid #b0b0b0;border-bottom:2px solid #a0a0a0;"></div>
<div class="t" style="letter-spacing:-0.232px;left:1204px;top:193.82px;font-size:17.5px;line-height:20px;color:#787878;">Enter text to search...</div>
<svg style="left:2066px;top:195px" width="15" height="15" viewBox="0 0 15 15"><circle cx="9.5" cy="5.5" r="4.5" fill="none" stroke="#555" stroke-width="1.6"/><path d="M6.5,8.5 L1,14" stroke="#555" stroke-width="1.8"/></svg>
<svg style="left:2090px;top:201px" width="9" height="5" viewBox="0 0 9 5"><polygon points="0,0 9,0 4.5,5" fill="#6e6e6e"/></svg>
<div class="a" style="left:1199px;top:219px;width:907px;height:510px;background:#fff;border:1px solid #a9a9a9;border-top:none;"></div>
<div class="a" style="left:2079px;top:220px;width:26px;height:508px;background:#f0f0f0;"></div>
<div class="a" style="left:2080px;top:221px;width:24px;height:25px;background:#fff;border:1px solid #a9a9a9;"></div>
<svg style="left:2087px;top:230px" width="10" height="6" viewBox="0 0 10 6"><polygon points="0,6 10,6 5.0,0" fill="#6e6e6e"/></svg>
<div class="a" style="left:2080px;top:246px;width:24px;height:135px;background:#fff;border:1px solid #a9a9a9;"></div>
<div class="a" style="left:2080px;top:702px;width:24px;height:25px;background:#fff;border:1px solid #a9a9a9;"></div>
<svg style="left:2087px;top:711px" width="10" height="6" viewBox="0 0 10 6"><polygon points="0,0 10,0 5.0,6" fill="#6e6e6e"/></svg>
<div class="a" style="left:1350px;top:585px;width:729px;height:27px;background:#cddcf3;border:1px dotted #333;"></div>
<svg style="left:1210px;top:231px" width="12" height="7" viewBox="0 0 12 7"><path d="M0.8,0.8 L6.0,6 L11.2,0.8" fill="none" stroke="#222" stroke-width="1.7"/></svg>
<svg style="left:1235px;top:222px" width="22" height="24" viewBox="0 0 22 24"><path d="M0.5,4 L6,0.5 L15.5,4.5 L10,8 Z" fill="#a7b393"/><path d="M3,6.5 L9,10 V23 L3,19.5 Z" fill="#a7b393"/><path d="M10.5,10 L19,5.5 V14.5 L10.5,19 Z" fill="#a7b393"/></svg>
<div class="t" style="letter-spacing:0.466px;left:1263px;top:224.82px;font-size:17.5px;line-height:20px;">Model</div>
<svg style="left:1264.5px;top:253px" width="21" height="18" viewBox="0 0 21 18"><path d="M9,0.5 H19.5 C20.3,0.5 20.5,1 20.5,1.5 V16 C20.5,16.5 20.3,17 19.5,17 H1.5 C0.7,17 0.5,16.5 0.5,16 V4.5 C0.5,3.8 0.8,3.5 1.5,3.5 H7 Z" fill="#ddb576"/><rect x="10" y="1.8" width="9" height="1.6" fill="#efe2c6"/></svg>
<div class="t" style="letter-spacing:-0.253px;left:1293px;top:252.82px;font-size:17.5px;line-height:20px;">Data Sources</div>
<svg style="left:1264.5px;top:281px" width="21" height="18" viewBox="0 0 21 18"><path d="M9,0.5 H19.5 C20.3,0.5 20.5,1 20.5,1.5 V16 C20.5,16.5 20.3,17 19.5,17 H1.5 C0.7,17 0.5,16.5 0.5,16 V4.5 C0.5,3.8 0.8,3.5 1.5,3.5 H7 Z" fill="#ddb576"/><rect x="10" y="1.8" width="9" height="1.6" fill="#efe2c6"/></svg>
<div class="t" style="letter-spacing:-0.349px;left:1293px;top:280.82px;font-size:17.5px;line-height:20px;">Perspectives</div>
<svg style="left:1242px;top:312px" width="7" height="12" viewBox="0 0 7 12"><path d="M0.8,0.8 L6,6.0 L0.8,11.2" fill="none" stroke="#222" stroke-width="1.7"/></svg>
<svg style="left:1264.5px;top:309px" width="21" height="18" viewBox="0 0 21 18"><path d="M9,0.5 H19.5 C20.3,0.5 20.5,1 20.5,1.5 V16 C20.5,16.5 20.3,17 19.5,17 H1.5 C0.7,17 0.5,16.5 0.5,16 V4.5 C0.5,3.8 0.8,3.5 1.5,3.5 H7 Z" fill="#ddb576"/><rect x="10" y="1.8" width="9" height="1.6" fill="#efe2c6"/></svg>
<div class="t" style="letter-spacing:-0.005px;left:1293px;top:308.82px;font-size:17.5px;line-height:20px;">Relationships</div>
<svg style="left:1264.5px;top:337px" width="21" height="18" viewBox="0 0 21 18"><path d="M9,0.5 H19.5 C20.3,0.5 20.5,1 20.5,1.5 V16 C20.5,16.5 20.3,17 19.5,17 H1.5 C0.7,17 0.5,16.5 0.5,16 V4.5 C0.5,3.8 0.8,3.5 1.5,3.5 H7 Z" fill="#ddb576"/><rect x="10" y="1.8" width="9" height="1.6" fill="#efe2c6"/></svg>
<div class="t" style="letter-spacing:-0.550px;left:1293px;top:336.82px;font-size:17.5px;line-height:20px;">Roles</div>
<svg style="left:1264.5px;top:365px" width="21" height="18" viewBox="0 0 21 18"><path d="M9,0.5 H19.5 C20.3,0.5 20.5,1 20.5,1.5 V16 C20.5,16.5 20.3,17 19.5,17 H1.5 C0.7,17 0.5,16.5 0.5,16 V4.5 C0.5,3.8 0.8,3.5 1.5,3.5 H7 Z" fill="#ddb576"/><rect x="10" y="1.8" width="9" height="1.6" fill="#efe2c6"/></svg>
<div class="t" style="letter-spacing:-0.257px;left:1293px;top:364.82px;font-size:17.5px;line-height:20px;">Shared Expressions</div>
<svg style="left:1240px;top:399px" width="12" height="7" viewBox="0 0 12 7"><path d="M0.8,0.8 L6.0,6 L11.2,0.8" fill="none" stroke="#222" stroke-width="1.7"/></svg>
<svg style="left:1265.5px;top:393.5px" width="23" height="18" viewBox="0 0 23 18"><path d="M2.5,15.5 V3.6 C2.5,3 2.8,2.7 3.5,2.7 H8 L9.5,0.9 H18.8 C19.4,0.9 19.7,1.2 19.7,1.8 V15.5" fill="#efeff2" stroke="#ddb576" stroke-width="1.4"/><path d="M0.8,8.6 H13.6 L18.3,16.2 H2.8 Z" fill="#ddb576"/></svg>
<div class="t" style="letter-spacing:-0.266px;left:1293px;top:392.82px;font-size:17.5px;line-height:20px;">Tables</div>
<svg style="left:1272px;top:424px" width="7" height="12" viewBox="0 0 7 12"><path d="M0.8,0.8 L6,6.0 L0.8,11.2" fill="none" stroke="#222" stroke-width="1.7"/></svg>
<svg style="left:1296px;top:420px" width="21" height="20" viewBox="0 0 21 20"><rect x="1" y="1" width="19" height="17" fill="none" stroke="#444" stroke-width="1.4"/><path d="M1,5 H20" stroke="#444" stroke-width="2"/><path d="M1,9.3 H20 M1,13.6 H20 M5.8,1 V18 M10.5,1 V18 M15.2,1 V18" stroke="#444" stroke-width="1"/><rect x="8" y="9" width="13" height="11" fill="#fff"/><text x="7.5" y="19" font-family="Liberation Serif" font-style="italic" font-weight="bold" font-size="14" fill="#444">fx</text></svg>
<div class="t" style="letter-spacing:-0.214px;left:1323px;top:420.82px;font-size:17.5px;line-height:20px;">% Return Rate</div>
<svg style="left:1272px;top:452px" width="7" height="12" viewBox="0 0 7 12"><path d="M0.8,0.8 L6,6.0 L0.8,11.2" fill="none" stroke="#222" stroke-width="1.7"/></svg>
<svg style="left:1296px;top:448px" width="21" height="20" viewBox="0 0 21 20"><rect x="1" y="1" width="19" height="17" fill="none" stroke="#444" stroke-width="1.4"/><path d="M1,5 H20" stroke="#444" stroke-width="2"/><path d="M1,9.3 H20 M1,13.6 H20 M5.8,1 V18 M10.5,1 V18 M15.2,1 V18" stroke="#444" stroke-width="1"/></svg>
<div class="t" style="letter-spacing:0.186px;left:1323px;top:448.82px;font-size:17.5px;line-height:20px;">Age</div>
<svg style="left:1270px;top:483px" width="12" height="7" viewBox="0 0 12 7"><path d="M0.8,0.8 L6.0,6 L11.2,0.8" fill="none" stroke="#222" stroke-width="1.7"/></svg>
<svg style="left:1296px;top:476px" width="21" height="20" viewBox="0 0 21 20"><rect x="1" y="1" width="19" height="17" fill="none" stroke="#444" stroke-width="1.4"/><path d="M1,5 H20" stroke="#444" stroke-width="2"/><path d="M1,9.3 H20 M1,13.6 H20 M5.8,1 V18 M10.5,1 V18 M15.2,1 V18" stroke="#444" stroke-width="1"/></svg>
<div class="t" style="letter-spacing:-0.110px;left:1323px;top:476.82px;font-size:17.5px;line-height:20px;">Analysis DAX</div>
<svg style="left:1302px;top:508px" width="7" height="12" viewBox="0 0 7 12"><path d="M0.8,0.8 L6,6.0 L0.8,11.2" fill="none" stroke="#222" stroke-width="1.7"/></svg>
<svg style="left:1325px;top:502px" width="22" height="22" viewBox="0 0 22 22"><path d="M1,6 L8,2 L14,5 L14,12 L8,16 L1,12 Z M1,6 L8,9.5 L14,5 M8,9.5 V16" fill="#fff" stroke="#333" stroke-width="1.5" stroke-linejoin="round"/><path d="M9,11 L15,7.5 L20,10 L20,16 L13,21 L9,18 Z" fill="#333"/></svg>
<div class="t" style="letter-spacing:0.005px;left:1353px;top:504.82px;font-size:17.5px;line-height:20px;">Partitions</div>
<svg style="left:1327px;top:531px" width="14" height="22" viewBox="0 0 14 22"><rect x="1" y="1" width="12" height="20" rx="2" fill="none" stroke="#333" stroke-width="1.8"/><rect x="3.2" y="3.5" width="7.6" height="3" fill="#333"/><rect x="3.2" y="9.0" width="1.6" height="1.6" fill="#333"/><rect x="3.2" y="11.9" width="1.6" height="1.6" fill="#333"/><rect x="3.2" y="14.8" width="1.6" height="1.6" fill="#333"/><rect x="3.2" y="17.7" width="1.6" height="1.6" fill="#333"/><rect x="6.1" y="9.0" width="1.6" height="1.6" fill="#333"/><rect x="6.1" y="11.9" width="1.6" height="1.6" fill="#333"/><rect x="6.1" y="14.8" width="1.6" height="1.6" fill="#333"/><rect x="6.1" y="17.7" width="1.6" height="1.6" fill="#333"/><rect x="9.0" y="9.0" width="1.6" height="1.6" fill="#333"/><rect x="9.0" y="11.9" width="1.6" height="1.6" fill="#333"/><rect x="9.0" y="14.8" width="1.6" height="1.6" fill="#333"/><rect x="9.0" y="17.7" width="1.6" height="1.6" fill="#333"/></svg>
<div class="t" style="letter-spacing:-0.050px;left:1353px;top:532.82px;font-size:17.5px;line-height:20px;">Last 2 Months Net Sales</div>
<svg style="left:1327px;top:559px" width="14" height="22" viewBox="0 0 14 22"><rect x="1" y="1" width="12" height="20" rx="2" fill="none" stroke="#333" stroke-width="1.8"/><rect x="3.2" y="3.5" width="7.6" height="3" fill="#333"/><rect x="3.2" y="9.0" width="1.6" height="1.6" fill="#333"/><rect x="3.2" y="11.9" width="1.6" height="1.6" fill="#333"/><rect x="3.2" y="14.8" width="1.6" height="1.6" fill="#333"/><rect x="3.2" y="17.7" width="1.6" height="1.6" fill="#333"/><rect x="6.1" y="9.0" width="1.6" height="1.6" fill="#333"/><rect x="6.1" y="11.9" width="1.6" height="1.6" fill="#333"/><rect x="6.1" y="14.8" width="1.6" height="1.6" fill="#333"/><rect x="6.1" y="17.7" width="1.6" height="1.6" fill="#333"/><rect x="9.0" y="9.0" width="1.6" height="1.6" fill="#333"/><rect x="9.0" y="11.9" width="1.6" height="1.6" fill="#333"/><rect x="9.0" y="14.8" width="1.6" height="1.6" fill="#333"/><rect x="9.0" y="17.7" width="1.6" height="1.6" fill="#333"/></svg>
<div class="t" style="letter-spacing:-0.003px;left:1353px;top:560.82px;font-size:17.5px;line-height:20px;">Last 2 Months Returns</div>
<svg style="left:1327px;top:587px" width="14" height="22" viewBox="0 0 14 22"><rect x="1" y="1" width="12" height="20" rx="2" fill="none" stroke="#333" stroke-width="1.8"/><rect x="3.2" y="3.5" width="7.6" height="3" fill="#333"/><rect x="3.2" y="9.0" width="1.6" height="1.6" fill="#333"/><rect x="3.2" y="11.9" width="1.6" height="1.6" fill="#333"/><rect x="3.2" y="14.8" width="1.6" height="1.6" fill="#333"/><rect x="3.2" y="17.7" width="1.6" height="1.6" fill="#333"/><rect x="6.1" y="9.0" width="1.6" height="1.6" fill="#333"/><rect x="6.1" y="11.9" width="1.6" height="1.6" fill="#333"/><rect x="6.1" y="14.8" width="1.6" height="1.6" fill="#333"/><rect x="6.1" y="17.7" width="1.6" height="1.6" fill="#333"/><rect x="9.0" y="9.0" width="1.6" height="1.6" fill="#333"/><rect x="9.0" y="11.9" width="1.6" height="1.6" fill="#333"/><rect x="9.0" y="14.8" width="1.6" height="1.6" fill="#333"/><rect x="9.0" y="17.7" width="1.6" height="1.6" fill="#333"/></svg>
<div class="t" style="letter-spacing:-0.431px;left:1353px;top:588.82px;font-size:17.5px;line-height:20px;">Net Sales</div>
<svg style="left:1327px;top:615px" width="14" height="22" viewBox="0 0 14 22"><rect x="1" y="1" width="12" height="20" rx="2" fill="none" stroke="#333" stroke-width="1.8"/><rect x="3.2" y="3.5" width="7.6" height="3" fill="#333"/><rect x="3.2" y="9.0" width="1.6" height="1.6" fill="#333"/><rect x="3.2" y="11.9" width="1.6" height="1.6" fill="#333"/><rect x="3.2" y="14.8" width="1.6" height="1.6" fill="#333"/><rect x="3.2" y="17.7" width="1.6" height="1.6" fill="#333"/><rect x="6.1" y="9.0" width="1.6" height="1.6" fill="#333"/><rect x="6.1" y="11.9" width="1.6" height="1.6" fill="#333"/><rect x="6.1" y="14.8" width="1.6" height="1.6" fill="#333"/><rect x="6.1" y="17.7" width="1.6" height="1.6" fill="#333"/><rect x="9.0" y="9.0" width="1.6" height="1.6" fill="#333"/><rect x="9.0" y="11.9" width="1.6" height="1.6" fill="#333"/><rect x="9.0" y="14.8" width="1.6" height="1.6" fill="#333"/><rect x="9.0" y="17.7" width="1.6" height="1.6" fill="#333"/></svg>
<div class="t" style="letter-spacing:-0.332px;left:1353px;top:616.82px;font-size:17.5px;line-height:20px;">Net Sales PM</div>
<svg style="left:1327px;top:643px" width="14" height="22" viewBox="0 0 14 22"><rect x="1" y="1" width="12" height="20" rx="2" fill="none" stroke="#333" stroke-width="1.8"/><rect x="3.2" y="3.5" width="7.6" height="3" fill="#333"/><rect x="3.2" y="9.0" width="1.6" height="1.6" fill="#333"/><rect x="3.2" y="11.9" width="1.6" height="1.6" fill="#333"/><rect x="3.2" y="14.8" width="1.6" height="1.6" fill="#333"/><rect x="3.2" y="17.7" width="1.6" height="1.6" fill="#333"/><rect x="6.1" y="9.0" width="1.6" height="1.6" fill="#333"/><rect x="6.1" y="11.9" width="1.6" height="1.6" fill="#333"/><rect x="6.1" y="14.8" width="1.6" height="1.6" fill="#333"/><rect x="6.1" y="17.7" width="1.6" height="1.6" fill="#333"/><rect x="9.0" y="9.0" width="1.6" height="1.6" fill="#333"/><rect x="9.0" y="11.9" width="1.6" height="1.6" fill="#333"/><rect x="9.0" y="14.8" width="1.6" height="1.6" fill="#333"/><rect x="9.0" y="17.7" width="1.6" height="1.6" fill="#333"/></svg>
<div class="t" style="letter-spacing:-0.268px;left:1353px;top:644.82px;font-size:17.5px;line-height:20px;">Net Sales Variance</div>
<svg style="left:1327px;top:671px" width="14" height="22" viewBox="0 0 14 22"><rect x="1" y="1" width="12" height="20" rx="2" fill="none" stroke="#333" stroke-width="1.8"/><rect x="3.2" y="3.5" width="7.6" height="3" fill="#333"/><rect x="3.2" y="9.0" width="1.6" height="1.6" fill="#333"/><rect x="3.2" y="11.9" width="1.6" height="1.6" fill="#333"/><rect x="3.2" y="14.8" width="1.6" height="1.6" fill="#333"/><rect x="3.2" y="17.7" width="1.6" height="1.6" fill="#333"/><rect x="6.1" y="9.0" width="1.6" height="1.6" fill="#333"/><rect x="6.1" y="11.9" width="1.6" height="1.6" fill="#333"/><rect x="6.1" y="14.8" width="1.6" height="1.6" fill="#333"/><rect x="6.1" y="17.7" width="1.6" height="1.6" fill="#333"/><rect x="9.0" y="9.0" width="1.6" height="1.6" fill="#333"/><rect x="9.0" y="11.9" width="1.6" height="1.6" fill="#333"/><rect x="9.0" y="14.8" width="1.6" height="1.6" fill="#333"/><rect x="9.0" y="17.7" width="1.6" height="1.6" fill="#333"/></svg>
<div class="t" style="letter-spacing:-0.297px;left:1353px;top:672.82px;font-size:17.5px;line-height:20px;">Net Sales Variance %</div>
<svg style="left:1327px;top:699px" width="14" height="22" viewBox="0 0 14 22"><rect x="1" y="1" width="12" height="20" rx="2" fill="none" stroke="#333" stroke-width="1.8"/><rect x="3.2" y="3.5" width="7.6" height="3" fill="#333"/><rect x="3.2" y="9.0" width="1.6" height="1.6" fill="#333"/><rect x="3.2" y="11.9" width="1.6" height="1.6" fill="#333"/><rect x="3.2" y="14.8" width="1.6" height="1.6" fill="#333"/><rect x="3.2" y="17.7" width="1.6" height="1.6" fill="#333"/><rect x="6.1" y="9.0" width="1.6" height="1.6" fill="#333"/><rect x="6.1" y="11.9" width="1.6" height="1.6" fill="#333"/><rect x="6.1" y="14.8" width="1.6" height="1.6" fill="#333"/><rect x="6.1" y="17.7" width="1.6" height="1.6" fill="#333"/><rect x="9.0" y="9.0" width="1.6" height="1.6" fill="#333"/><rect x="9.0" y="11.9" width="1.6" height="1.6" fill="#333"/><rect x="9.0" y="14.8" width="1.6" height="1.6" fill="#333"/><rect x="9.0" y="17.7" width="1.6" height="1.6" fill="#333"/></svg>
<div class="t" style="letter-spacing:0.144px;left:1353px;top:700.82px;font-size:17.5px;line-height:20px;">Profit Difference</div>
<svg style="left:1327px;top:727px" width="14" height="22" viewBox="0 0 14 22"><rect x="1" y="1" width="12" height="20" rx="2" fill="none" stroke="#333" stroke-width="1.8"/><rect x="3.2" y="3.5" width="7.6" height="3" fill="#333"/><rect x="3.2" y="9.0" width="1.6" height="1.6" fill="#333"/><rect x="3.2" y="11.9" width="1.6" height="1.6" fill="#333"/><rect x="3.2" y="14.8" width="1.6" height="1.6" fill="#333"/><rect x="3.2" y="17.7" width="1.6" height="1.6" fill="#333"/><rect x="6.1" y="9.0" width="1.6" height="1.6" fill="#333"/><rect x="6.1" y="11.9" width="1.6" height="1.6" fill="#333"/><rect x="6.1" y="14.8" width="1.6" height="1.6" fill="#333"/><rect x="6.1" y="17.7" width="1.6" height="1.6" fill="#333"/><rect x="9.0" y="9.0" width="1.6" height="1.6" fill="#333"/><rect x="9.0" y="11.9" width="1.6" height="1.6" fill="#333"/><rect x="9.0" y="14.8" width="1.6" height="1.6" fill="#333"/><rect x="9.0" y="17.7" width="1.6" height="1.6" fill="#333"/></svg>
<div class="a" style="left:1200px;top:728px;width:879px;height:1px;background:#a9a9a9;"></div>
<div class="a" style="left:1202px;top:729px;width:158px;height:37px;background:#f0f0f0;border:1px solid #cccccc;border-top:none;"></div>
<div class="t" style="letter-spacing:-0.049px;left:1242px;top:738.22px;font-size:17.5px;line-height:20px;">TOM Explorer</div>
<div class="a" style="left:1359px;top:729px;width:219px;height:37px;background:#f0f0f0;border:1px solid #cccccc;border-top:none;"></div>
<div class="t" style="letter-spacing:-0.231px;left:1399px;top:738.22px;font-size:17.5px;line-height:20px;">Best Practice Analyzer</div>
<div class="a" style="left:1577px;top:729px;width:151px;height:37px;background:#f0f0f0;border:1px solid #cccccc;border-top:none;"></div>
<div class="t" style="letter-spacing:-0.176px;left:1618px;top:738.22px;font-size:17.5px;line-height:20px;">Data Refresh</div>
<div class="a" style="left:1727px;top:729px;width:108px;height:37px;background:#f0f0f0;border:1px solid #cccccc;border-top:none;"></div>
<div class="t" style="letter-spacing:0.104px;left:1768px;top:738.22px;font-size:17.5px;line-height:20px;">Macros</div>
<svg style="left:1215px;top:736px" width="22" height="22" viewBox="0 0 22 22"><rect x="1" y="1" width="3" height="3" fill="#333"/><path d="M7,2.5 H15" stroke="#333" stroke-width="1.6"/><rect x="5" y="9" width="3.5" height="3.5" fill="#333"/><path d="M11,10.8 H21" stroke="#333" stroke-width="1.6"/><rect x="5" y="16.5" width="3.5" height="3.5" fill="#333"/><path d="M11,18.2 H21" stroke="#333" stroke-width="1.6"/></svg>
<svg style="left:1366px;top:732px" width="34" height="30" viewBox="0 0 34 30"><path d="M11.8,10.5 V4.7 H22.8 L26.8,8.7 V23.6 H18.3" fill="none" stroke="#3a3a3a" stroke-width="1.5" stroke-linejoin="round"/><path d="M22.8,4.7 V7.5 H26.8 Z" fill="#3a3a3a"/><path d="M14.6,9.2 L15.8,10.3 L18.5,8" fill="none" stroke="#3a3a3a" stroke-width="1.3"/><path d="M17.6,13 L18.3,12.2 M16.8,18.8 L18.5,17.3" stroke="#3a3a3a" stroke-width="1.2"/><path d="M20.3,10.3 H24.5 M20.3,14.7 H24.5 M20.3,19.4 H24.5" stroke="#3a3a3a" stroke-width="1.4"/><path d="M8.2,13.3 H15.6 M10.2,13.3 V17.5 L7.2,22 M13.2,13.3 V17.5 L16.2,22" fill="none" stroke="#3a3a3a" stroke-width="1.4"/><path d="M8,20 H15.2 L17,23 C17.2,24 16.6,24.5 15.5,24.5 H8 C6.8,24.5 6.4,24 6.6,23 Z" fill="#3a3a3a"/></svg>
<svg style="left:1586px;top:732px" width="30" height="28" viewBox="0 0 30 28"><circle cx="20.3" cy="10" r="3.9" fill="none" stroke="#3a3a3a" stroke-width="2.3"/><circle cx="20.3" cy="10" r="1.6" fill="#3a3a3a"/><path d="M24.46,11.72 L26.21,12.45 M22.02,14.16 L22.75,15.91 M18.58,14.16 L17.85,15.91 M16.14,11.72 L14.39,12.45 M16.14,8.28 L14.39,7.55 M18.58,5.84 L17.85,4.09 M22.02,5.84 L22.75,4.09 M24.46,8.28 L26.21,7.55 " stroke="#3a3a3a" stroke-width="2.1"/><circle cx="11.5" cy="18.6" r="3.6" fill="none" stroke="#3a3a3a" stroke-width="2.3"/><circle cx="11.5" cy="18.6" r="1.6" fill="#3a3a3a"/><path d="M15.70,18.60 L17.70,18.60 M14.47,21.57 L15.88,22.98 M11.50,22.80 L11.50,24.80 M8.53,21.57 L7.12,22.98 M7.30,18.60 L5.30,18.60 M8.53,15.63 L7.12,14.22 M11.50,14.40 L11.50,12.40 M14.47,15.63 L15.88,14.22 " stroke="#3a3a3a" stroke-width="2.1"/></svg>
<svg style="left:1736px;top:734px" width="30" height="26" viewBox="0 0 30 26"><path d="M8.6,6.5 V17.5" stroke="#3a3a3a" stroke-width="1.6"/><path d="M12.2,7.5 L19.5,12 L12.2,16.5 Z" fill="#0b55a3"/><path d="M22.2,6.5 V17.5" stroke="#3a3a3a" stroke-width="1.9"/></svg>
<div class="a" style="left:1197px;top:777px;width:911px;height:449px;background:#f0f0f0;border:1px solid #cfcfcf;"></div>
<div class="a" style="left:1198px;top:778px;width:909px;height:35px;background:#dcdcdc;"></div>
<div class="t" style="letter-spacing:0.044px;left:1206px;top:787.22px;font-size:17.5px;line-height:20px;font-weight:bold;">Properties</div>
<svg style="left:2026px;top:790px" width="12" height="12" viewBox="0 0 12 12"><rect x="0.75" y="0.75" width="10.5" height="10.5" fill="none" stroke="#555" stroke-width="1.5"/></svg>
<svg style="left:2055px;top:789px" width="12" height="14" viewBox="0 0 12 14"><path d="M2.2,1 H9.8 M3.2,1 C4.8,3 4.6,5.5 1.5,8.3 M8.8,1 C7.2,3 7.4,5.5 10.5,8.3 M0.5,8.6 H11.5 M6,8.6 V14" fill="none" stroke="#555" stroke-width="1.15"/></svg>
<svg style="left:2084px;top:789px" width="13" height="13" viewBox="0 0 13 13"><path d="M0.5,0.5 L12.5,12.5 M12.5,0.5 L0.5,12.5" stroke="#555" stroke-width="1.5"/></svg>
<div class="a" style="left:1199px;top:813px;width:38px;height:34px;background:#cfdcf2;border:1px solid #b3c1d8;"></div>
<svg style="left:1196px;top:810px" width="84" height="40" viewBox="0 0 84 40"><rect x="11.7" y="9.7" width="7.2" height="7" fill="#333"/><path d="M15.3,11 V15.4 M13.1,13.2 H17.5" stroke="#fff" stroke-width="1.3"/><rect x="11.7" y="23.3" width="7.2" height="7.3" fill="#333"/><path d="M15.3,24.7 V29.2 M13.1,26.95 H17.5" stroke="#fff" stroke-width="1.3"/><path d="M21,10.3 H28 M21,13.3 H28 M21,16.3 H28 M21,19.3 H28 M21,22.3 H28 M21,26.8 H28 M21,29.8 H28 M30,13.3 H33 M30,16.3 H33 M30,19.3 H33 M30,22.3 H33 M30,29.8 H33" stroke="#333" stroke-width="1.4"/><rect x="49.7" y="9.9" width="10.1" height="9.9" fill="#333"/><path d="M51.8,18.6 L54.75,11.2 L57.7,18.6 M52.8,16.2 H56.7" fill="none" stroke="#fff" stroke-width="1.3"/><path d="M51.3,23.9 H58.6 L51.8,29.7 H58.8" fill="none" stroke="#333" stroke-width="2"/><path d="M66.2,14 V25" stroke="#0b5aad" stroke-width="2"/><path d="M61.8,22.8 L66.2,28 L70.6,22.8 Z" fill="#0b5aad"/></svg>
<div class="a" style="left:1199px;top:847px;width:907px;height:287px;background:#fff;border:1px solid #b8b8b8;border-bottom:1px solid #c8c8c8;border-left-color:#fff;"></div>
<div class="a" style="left:1200px;top:848px;width:29px;height:285px;background:#f0f0f0;"></div>
<div class="a" style="left:1229px;top:875px;width:850px;height:1px;background:#ececec;"></div>
<div class="a" style="left:1645px;top:849px;width:1px;height:27px;background:#ececec;"></div>
<div class="t" style="letter-spacing:-0.019px;left:1235.4px;top:853.82px;font-size:17.5px;line-height:20px;">Display Folder</div>
<div class="a" style="left:1229px;top:902px;width:850px;height:1px;background:#ececec;"></div>
<div class="a" style="left:1645px;top:876px;width:1px;height:27px;background:#ececec;"></div>
<div class="t" style="letter-spacing:0.100px;left:1235.4px;top:880.82px;font-size:17.5px;line-height:20px;">Format String</div>
<div class="t" style="letter-spacing:0.454px;left:1649.4px;top:880.82px;font-size:17.5px;line-height:20px;">\$#,0;-\$#,0;\$#,0</div>
<svg style="left:1212.5px;top:884px" width="7.5" height="12.5" viewBox="0 0 7.5 12.5"><path d="M0.8,0.8 L6.5,6.25 L0.8,11.7" fill="none" stroke="#999999" stroke-width="2.6"/></svg>
<div class="a" style="left:1229px;top:929px;width:850px;height:1px;background:#ececec;"></div>
<div class="a" style="left:1645px;top:903px;width:1px;height:27px;background:#ececec;"></div>
<div class="t" style="letter-spacing:0.355px;left:1235.4px;top:907.82px;font-size:17.5px;line-height:20px;">Hidden</div>
<div class="t" style="letter-spacing:-1.139px;left:1649.4px;top:907.82px;font-size:17.5px;line-height:20px;">False</div>
<div class="a" style="left:1229px;top:930px;width:416px;height:27px;background:#f0f0f0;"></div>
<div class="a" style="left:1645px;top:930px;width:1px;height:27px;background:#ececec;"></div>
<div class="t" style="letter-spacing:-0.122px;left:1235.4px;top:934.82px;font-size:17.5px;line-height:20px;">Name</div>
<div class="t" style="letter-spacing:-0.431px;left:1649.4px;top:934.82px;font-size:17.5px;line-height:20px;">Net Sales</div>
<div class="a" style="left:1200px;top:957px;width:879px;height:27px;background:#f0f0f0;"></div>
<div class="t" style="letter-spacing:0.655px;left:1235.4px;top:961.82px;font-size:17.5px;line-height:20px;font-weight:bold;">Metadata</div>
<svg style="left:1209.5px;top:966px" width="13" height="8" viewBox="0 0 13 8"><path d="M0.8,0.8 L6.5,7 L12.2,0.8" fill="none" stroke="#333" stroke-width="2.6"/></svg>
<div class="a" style="left:1229px;top:1010px;width:850px;height:1px;background:#ececec;"></div>
<div class="a" style="left:1645px;top:984px;width:1px;height:27px;background:#ececec;"></div>
<div class="t" style="letter-spacing:0.360px;left:1235.4px;top:988.82px;font-size:17.5px;line-height:20px;">Annotations</div>
<div class="t" style="letter-spacing:0.338px;left:1649.4px;top:988.82px;font-size:17.5px;line-height:20px;">1 annotation</div>
<svg style="left:1212.5px;top:992px" width="7.5" height="12.5" viewBox="0 0 7.5 12.5"><path d="M0.8,0.8 L6.5,6.25 L0.8,11.7" fill="none" stroke="#999999" stroke-width="2.6"/></svg>
<div class="a" style="left:1229px;top:1037px;width:850px;height:1px;background:#ececec;"></div>
<div class="a" style="left:1645px;top:1011px;width:1px;height:27px;background:#ececec;"></div>
<div class="t" style="letter-spacing:-0.061px;left:1235.4px;top:1015.82px;font-size:17.5px;line-height:20px;color:#8a8a8a;">Data Type</div>
<div class="t" style="letter-spacing:0.268px;left:1649.4px;top:1015.82px;font-size:17.5px;line-height:20px;color:#8a8a8a;">Integer / Whole Number (int64)</div>
<div class="a" style="left:1229px;top:1064px;width:850px;height:1px;background:#ececec;"></div>
<div class="a" style="left:1645px;top:1038px;width:1px;height:27px;background:#ececec;"></div>
<div class="t" style="letter-spacing:0.179px;left:1235.4px;top:1042.82px;font-size:17.5px;line-height:20px;color:#8a8a8a;">DAX identifier</div>
<div class="t" style="letter-spacing:-0.364px;left:1649.4px;top:1042.82px;font-size:17.5px;line-height:20px;color:#8a8a8a;">[Net Sales]</div>
<div class="a" style="left:1229px;top:1091px;width:850px;height:1px;background:#ececec;"></div>
<div class="a" style="left:1645px;top:1065px;width:1px;height:27px;background:#ececec;"></div>
<div class="t" style="letter-spacing:-0.167px;left:1235.4px;top:1069.82px;font-size:17.5px;line-height:20px;color:#8a8a8a;">Error Message</div>
<div class="a" style="left:1229px;top:1118px;width:850px;height:1px;background:#ececec;"></div>
<div class="a" style="left:1645px;top:1092px;width:1px;height:27px;background:#ececec;"></div>
<div class="t" style="letter-spacing:-0.057px;left:1235.4px;top:1096.82px;font-size:17.5px;line-height:20px;">Extended Properties</div>
<div class="t" style="letter-spacing:0.186px;left:1649.4px;top:1096.82px;font-size:17.5px;line-height:20px;">0 extended properties</div>
<svg style="left:1212.5px;top:1100px" width="7.5" height="12.5" viewBox="0 0 7.5 12.5"><path d="M0.8,0.8 L6.5,6.25 L0.8,11.7" fill="none" stroke="#999999" stroke-width="2.6"/></svg>
<div class="a" style="left:1229px;top:1145px;width:850px;height:1px;background:#ececec;"></div>
<div class="a" style="left:1645px;top:1119px;width:1px;height:27px;background:#ececec;"></div>
<div class="t" style="left:1235.4px;top:1123.82px;font-size:17.5px;line-height:20px;color:#8a8a8a;">Object Type</div>
<div class="t" style="left:1649.4px;top:1123.82px;font-size:17.5px;line-height:20px;color:#8a8a8a;">Measure</div>
<div class="a" style="left:1199px;top:1133px;width:907px;height:93px;background:#f0f0f0;border:1px solid #cfcfcf;border-top:1px solid #e0e0e0;"></div>
<div class="a" style="left:2079px;top:848px;width:26px;height:285px;background:#f0f0f0;"></div>
<div class="a" style="left:2080px;top:849px;width:24px;height:25px;background:#fff;border:1px solid #a9a9a9;"></div>
<svg style="left:2087px;top:858px" width="10" height="6" viewBox="0 0 10 6"><polygon points="0,6 10,6 5.0,0" fill="#6e6e6e"/></svg>
<div class="a" style="left:2080px;top:891px;width:24px;height:89px;background:#fff;border:1px solid #a9a9a9;"></div>
<div class="a" style="left:2080px;top:1106px;width:24px;height:25px;background:#fff;border:1px solid #a9a9a9;"></div>
<svg style="left:2087px;top:1115px" width="10" height="6" viewBox="0 0 10 6"><polygon points="0,0 10,0 5.0,6" fill="#6e6e6e"/></svg>
<div class="t" style="letter-spacing:0.407px;left:1208.3px;top:1144.92px;font-size:17.5px;line-height:20px;font-weight:bold;">Name</div>
<div class="t" style="letter-spacing:0.200px;left:1208px;top:1171.92px;font-size:17.5px;line-height:20px;">The name of this object. Warning: Changing the name can break formula logic, if Automatic Formula Fix-up is</div>
<div class="t" style="letter-spacing:0.049px;left:1208px;top:1197.22px;font-size:17.5px;line-height:20px;">disabled.</div>
<div class="t" style="letter-spacing:-0.389px;left:1217px;top:1238.72px;font-size:17.5px;line-height:20px;font-weight:bold;">74 BP issues</div>
<svg style="left:1376px;top:1234px" width="30" height="26" viewBox="0 0 30 26"><text x="4.4" y="12.9" font-family="Liberation Sans" font-weight="bold" font-size="11" fill="#5a5d66" textLength="13.4" lengthAdjust="spacingAndGlyphs">AB</text><path d="M15.4,19.5 L21.8,13.2 L24.3,15.7 L17.9,22 Z" fill="#4a88c8"/><path d="M22.6,12.4 L23.7,11.3 L26.2,13.8 L25.1,14.9 Z" fill="#4a88c8"/><path d="M13.4,21.2 L14.6,20.3 L17,22.7 L16.1,23.8 L13.4,24 Z" fill="#4a88c8"/></svg>
<div class="t" style="letter-spacing:-0.591px;left:1407px;top:1238.12px;font-size:17.5px;line-height:20px;">Ln 1</div>
<div class="t" style="letter-spacing:-0.312px;left:1460.5px;top:1238.12px;font-size:17.5px;line-height:20px;">Col 1</div>
<div class="t" style="letter-spacing:-0.496px;left:1541px;top:1238.12px;font-size:17.5px;line-height:20px;">INS</div>
<svg style="left:1644px;top:1232px" width="32" height="28" viewBox="0 0 32 28"><rect x="7.4" y="5.2" width="18.4" height="18.4" fill="none" stroke="#555962" stroke-width="1.8" stroke-dasharray="4.2,1.6,2.8,1.6,2.8,1.6,4.2,0"/><rect x="9.5" y="7.5" width="13.5" height="13.5" fill="#4a88c8"/></svg>
<div class="t" style="letter-spacing:-0.150px;left:1677.3px;top:1238.12px;font-size:17.5px;line-height:20px;">Measure &quot;Net Sales&quot;</div>
<svg style="left:1952px;top:1238px" width="18" height="17" viewBox="0 0 18 17"><rect x="0" y="0" width="18" height="4" rx="0.8" fill="#6b6b72"/><rect x="0" y="6.1" width="18" height="4" rx="0.8" fill="#6b6b72"/><rect x="0" y="12.1" width="18" height="4" rx="0.8" fill="#6b6b72"/><rect x="1" y="1.4" width="1.5" height="1.5" fill="#fff"/><rect x="1" y="7.5" width="1.5" height="1.5" fill="#fff"/><rect x="1" y="13.5" width="1.5" height="1.5" fill="#fff"/></svg>
<div class="t" style="letter-spacing:0.119px;left:1977.5px;top:1238.12px;font-size:17.5px;line-height:20px;">localhost:64060</div>
</body></html>
